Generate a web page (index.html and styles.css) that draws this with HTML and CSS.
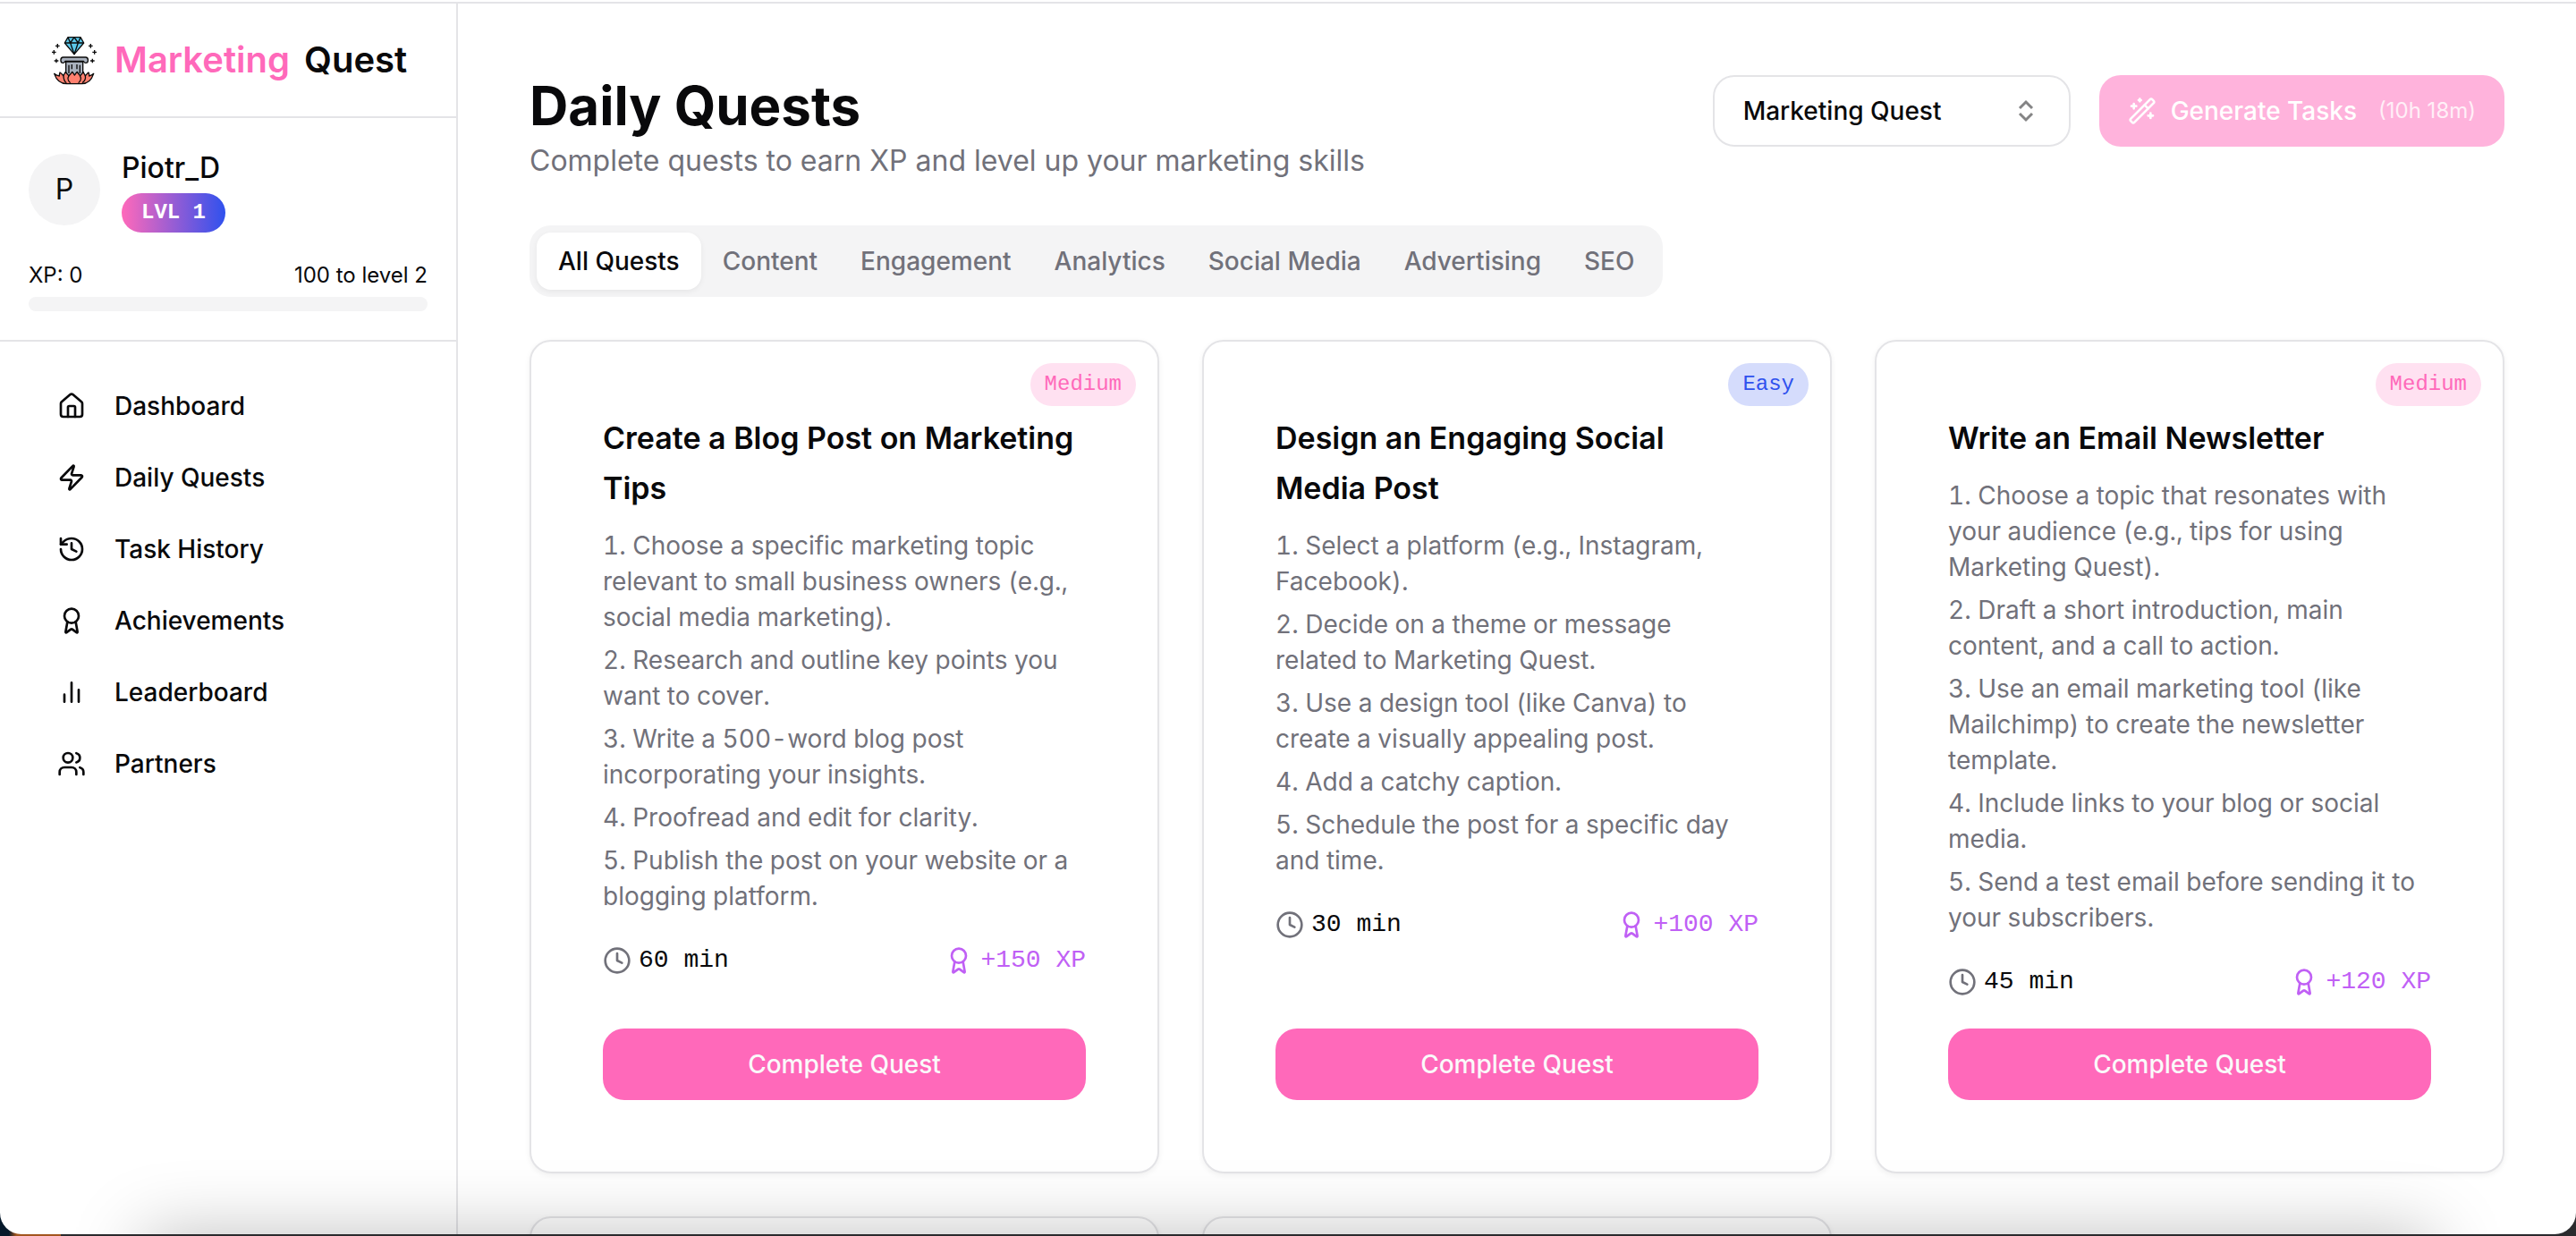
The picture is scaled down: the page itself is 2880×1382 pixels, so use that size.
FILE: index.html
```
<!DOCTYPE html>
<html lang="en">
<head>
    <meta charset="UTF-8">
    <meta name="viewport" content="width=device-width, initial-scale=1.0">
    <title>Daily Quests - Marketing Quest</title>
    <link rel="stylesheet" href="styles.css">
</head>
<body>

<!-- shared icons -->
<svg class="sprite" aria-hidden="true">
    <symbol id="icon-clock" viewBox="0 0 24 24">
        <circle cx="12" cy="12" r="10"/>
        <path d="M12 6v6l4 2"/>
    </symbol>
    <symbol id="icon-award" viewBox="0 0 24 24">
        <path d="m15.477 12.89 1.515 8.526a.5.5 0 0 1-.81.47l-3.58-2.687a1 1 0 0 0-1.197 0l-3.586 2.686a.5.5 0 0 1-.81-.469l1.514-8.526"/>
        <circle cx="12" cy="8" r="6"/>
    </symbol>
</svg>

<div class="window">
    <aside class="sidebar">
        <div class="brand">
            <svg class="logo" viewBox="48 54 168 168" aria-hidden="true">
                <g class="logo-sparks">
                    <path d="M73 84v14M66 91h14M61 105v14M54 112h14M69 134v14M62 141h14"/>
                    <path d="M184 84v14M177 91h14M197 105v14M190 112h14M190 134v14M183 141h14"/>
                </g>
                <g class="logo-line">
                    <path fill="#5bc8ea" d="M108 62h42l11 19-32 38-32-38z"/>
                    <path fill="none" d="M97 81h64M108 62l8 19 13-19 13 19 8-19M116 81l13 38 13-38"/>
                    <path fill="#a9b1bd" d="M101 144h57v54h-57z"/>
                    <path fill="none" d="M111 155v28M121 153v16M138 153v16M148 155v28"/>
                    <path fill="#a9b1bd" d="M92 129h75c11 0 11 19 0 19-5 0-6-3-7-6H99c-1 3-2 6-7 6-11 0-11-19 0-19z"/>
                    <path fill="#ff806f" d="M62 184c6 6 12 6 17 8-1-5 2-8 2-12 6 3 8 8 12 11 1-5 5-7 6-12 6 4 8 9 12 12 3-5 9-7 11-13 5 3 4 7 8 11 4-4 4-8 9-11 2 6 7 8 10 13 4-3 5-8 11-12 1 5 4 7 6 12 4-3 6-8 11-11 1 4 3 7 2 12 5-2 9-2 15-8-8 25-24 34-40 34h-50c-16 0-34-9-42-34z"/>
                    <path fill="none" d="M93 191c0 9 2 18 10 24M111 191c-5 8-3 18 5 24M148 191c5 8 3 18-5 24M166 191c2 9-1 18-10 24"/>
                </g>
            </svg>
            <span class="brand-name"><span class="brand-accent">Marketing</span><span>Quest</span></span>
        </div>

        <div class="profile">
            <div class="user">
                <div class="avatar">P</div>
                <div class="user-info">
                    <span class="user-name">Piotr_D</span>
                    <span class="level">LVL 1</span>
                </div>
            </div>
            <div class="xp-labels">
                <span>XP: 0</span>
                <span>100 to level 2</span>
            </div>
            <div class="xp-bar" role="progressbar" aria-label="XP" aria-valuemin="0" aria-valuemax="100" aria-valuenow="0"></div>
        </div>

        <nav class="menu">
            <a href="#dashboard">
                <svg class="icon" viewBox="0 0 24 24"><path d="M15 21v-8a1 1 0 0 0-1-1h-4a1 1 0 0 0-1 1v8"/><path d="M3 10a2 2 0 0 1 .709-1.528l7-5.999a2 2 0 0 1 2.582 0l7 5.999A2 2 0 0 1 21 10v9a2 2 0 0 1-2 2H5a2 2 0 0 1-2-2z"/></svg>
                Dashboard
            </a>
            <a href="#quests">
                <svg class="icon" viewBox="0 0 24 24"><path d="M4 14a1 1 0 0 1-.78-1.63l9.9-10.2a.5.5 0 0 1 .86.46l-1.92 6.02A1 1 0 0 0 13 10h7a1 1 0 0 1 .78 1.63l-9.9 10.2a.5.5 0 0 1-.86-.46l1.92-6.02A1 1 0 0 0 11 14z"/></svg>
                Daily Quests
            </a>
            <a href="#history">
                <svg class="icon" viewBox="0 0 24 24"><path d="M3 12a9 9 0 1 0 9-9 9.75 9.75 0 0 0-6.74 2.74L3 8"/><path d="M3 3v5h5"/><path d="M12 7v5l4 2"/></svg>
                Task History
            </a>
            <a href="#achievements">
                <svg class="icon"><use href="#icon-award"/></svg>
                Achievements
            </a>
            <a href="#leaderboard">
                <svg class="icon" viewBox="0 0 24 24"><path d="M18 20V10M12 20V4M6 20v-6"/></svg>
                Leaderboard
            </a>
            <a href="#partners">
                <svg class="icon" viewBox="0 0 24 24"><path d="M16 21v-2a4 4 0 0 0-4-4H6a4 4 0 0 0-4 4v2"/><circle cx="9" cy="7" r="4"/><path d="M22 21v-2a4 4 0 0 0-3-3.87"/><path d="M16 3.13a4 4 0 0 1 0 7.75"/></svg>
                Partners
            </a>
        </nav>
    </aside>

    <main class="content">
        <header class="page-header">
            <div>
                <h1>Daily Quests</h1>
                <p class="subtitle">Complete quests to earn XP and level up your marketing skills</p>
            </div>
            <div class="actions">
                <div class="project">
                    <select class="project-select" aria-label="Project">
                        <option>Marketing Quest</option>
                    </select>
                    <svg class="project-caret" viewBox="0 0 32 32" aria-hidden="true"><path d="M9 13l7-7 7 7M9 19l7 7 7-7"/></svg>
                </div>
                <button class="btn generate" type="button" disabled>
                    <svg class="icon" viewBox="0 0 24 24"><path d="m21.64 3.64-1.28-1.28a1.21 1.21 0 0 0-1.72 0L2.36 18.64a1.21 1.21 0 0 0 0 1.72l1.28 1.28a1.2 1.2 0 0 0 1.72 0L21.64 5.36a1.2 1.2 0 0 0 0-1.72"/><path d="m14 7 3 3M5 6v4M19 14v4M10 2v2M7 8H3M21 16h-4M11 3H9"/></svg>
                    Generate Tasks
                    <span class="countdown">(10h 18m)</span>
                </button>
            </div>
        </header>

        <div class="tabs" role="tablist">
            <button class="tab active" type="button" role="tab" aria-selected="true">All Quests</button>
            <button class="tab" type="button" role="tab">Content</button>
            <button class="tab" type="button" role="tab">Engagement</button>
            <button class="tab" type="button" role="tab">Analytics</button>
            <button class="tab" type="button" role="tab">Social Media</button>
            <button class="tab" type="button" role="tab">Advertising</button>
            <button class="tab" type="button" role="tab">SEO</button>
        </div>

        <section class="quests">
            <article class="card">
                <span class="badge medium">Medium</span>
                <h2>Create a Blog Post on Marketing Tips</h2>
                <div class="steps">
                    <p>1. Choose a specific marketing topic relevant to small business owners (e.g., social media marketing).</p>
                    <p>2. Research and outline key points you want to cover.</p>
                    <p>3. Write a 500-word blog post incorporating your insights.</p>
                    <p>4. Proofread and edit for clarity.</p>
                    <p>5. Publish the post on your website or a blogging platform.</p>
                </div>
                <div class="meta">
                    <span class="time"><svg class="icon"><use href="#icon-clock"/></svg>60 min</span>
                    <span class="reward"><svg class="icon"><use href="#icon-award"/></svg>+150 XP</span>
                </div>
                <button class="btn complete" type="button">Complete Quest</button>
            </article>

            <article class="card">
                <span class="badge easy">Easy</span>
                <h2>Design an Engaging Social Media Post</h2>
                <div class="steps">
                    <p>1. Select a platform (e.g., Instagram, Facebook).</p>
                    <p>2. Decide on a theme or message related to Marketing Quest.</p>
                    <p>3. Use a design tool (like Canva) to create a visually appealing post.</p>
                    <p>4. Add a catchy caption.</p>
                    <p>5. Schedule the post for a specific day and time.</p>
                </div>
                <div class="meta">
                    <span class="time"><svg class="icon"><use href="#icon-clock"/></svg>30 min</span>
                    <span class="reward"><svg class="icon"><use href="#icon-award"/></svg>+100 XP</span>
                </div>
                <button class="btn complete" type="button">Complete Quest</button>
            </article>

            <article class="card">
                <span class="badge medium">Medium</span>
                <h2>Write an Email Newsletter</h2>
                <div class="steps">
                    <p>1. Choose a topic that resonates with your audience (e.g., tips for using Marketing Quest).</p>
                    <p>2. Draft a short introduction, main content, and a call to action.</p>
                    <p>3. Use an email marketing tool (like Mailchimp) to create the newsletter template.</p>
                    <p>4. Include links to your blog or social media.</p>
                    <p>5. Send a test email before sending it to your subscribers.</p>
                </div>
                <div class="meta">
                    <span class="time"><svg class="icon"><use href="#icon-clock"/></svg>45 min</span>
                    <span class="reward"><svg class="icon"><use href="#icon-award"/></svg>+120 XP</span>
                </div>
                <button class="btn complete" type="button">Complete Quest</button>
            </article>

            <article class="card"></article>
            <article class="card"></article>
        </section>
    </main>
</div>
</body>
</html>
```
FILE: styles.css
```
* {
    box-sizing: border-box;
}

body {
    margin: 0;
    height: 100vh;
    padding-bottom: 2px;
    overflow: hidden;
    background: linear-gradient(90deg, #06192b 10px, #a3561f 18px, #a3561f 68px, #2a2a2d 68px);
    font-family: Inter, "Liberation Sans", sans-serif;
    font-size: 28px;
    line-height: 40px;
    color: #09090b;
}

h1, h2, p {
    margin: 0;
}

button, select {
    font: inherit;
    color: inherit;
}

.sprite {
    position: absolute;
    width: 0;
    height: 0;
}

.icon {
    width: 32px;
    height: 32px;
    flex-shrink: 0;
    fill: none;
    stroke: currentColor;
    stroke-width: 2;
    stroke-linecap: round;
    stroke-linejoin: round;
}

.window {
    position: relative;
    display: flex;
    height: 100%;
    padding-top: 2px;
    overflow: hidden;
    background-color: #fff;
    border-radius: 0 0 24px 24px;
}

/* soft shadow along the bottom edge */
.window::after {
    content: "";
    position: absolute;
    top: 100%;
    left: 160px;
    right: 160px;
    height: 160px;
    box-shadow: 0 0 80px rgba(0, 0, 0, 0.25);
    pointer-events: none;
}

/* sidebar */
.sidebar {
    width: 512px;
    flex-shrink: 0;
    border-top: 2px solid #e4e4e7;
    border-right: 2px solid #e4e4e7;
}

.brand {
    display: flex;
    align-items: center;
    gap: 16px;
    height: 128px;
    padding-left: 56px;
    border-bottom: 2px solid #e4e4e7;
}

.logo {
    width: 56px;
    height: 56px;
    flex-shrink: 0;
}

.logo-sparks,
.logo-line {
    fill: none;
    stroke: #0b0b0b;
    stroke-width: 4;
    stroke-linejoin: round;
}

.brand-name {
    display: flex;
    gap: 16px;
    font-size: 40px;
    font-weight: 600;
}

.brand-accent {
    color: #ff69ba;
}

.profile {
    padding: 32px;
    border-bottom: 2px solid #e4e4e7;
}

.user {
    display: flex;
    align-items: center;
    gap: 24px;
}

.avatar {
    display: flex;
    align-items: center;
    justify-content: center;
    width: 80px;
    height: 80px;
    border-radius: 50%;
    background-color: #f4f4f5;
    font-size: 32px;
}

.user-info {
    display: flex;
    flex-direction: column;
    align-items: flex-start;
    gap: 4px;
}

.user-name {
    font-size: 32px;
    font-weight: 500;
    line-height: 48px;
}

.level {
    padding: 4px 22px;
    border-radius: 22px;
    background: linear-gradient(90deg, #ff69ba, #2f51ee);
    color: #fff;
    font-family: "Liberation Mono", monospace;
    font-size: 24px;
    font-weight: 700;
    line-height: 36px;
}

.xp-labels {
    display: flex;
    justify-content: space-between;
    margin-top: 32px;
    margin-bottom: 8px;
    font-size: 24px;
    line-height: 32px;
}

.xp-bar {
    height: 16px;
    border-radius: 8px;
    background-color: #f4f4f5;
}

.menu {
    display: flex;
    flex-direction: column;
    padding: 32px;
}

.menu a {
    display: flex;
    align-items: center;
    gap: 32px;
    padding: 20px 32px;
    color: inherit;
    font-weight: 500;
    text-decoration: none;
}

/* main column */
.content {
    flex: 1;
    min-width: 0;
    padding: 80px;
    border-top: 2px solid #e4e4e7;
    overflow: hidden;
}

.page-header {
    display: flex;
    justify-content: space-between;
    align-items: flex-start;
    height: 120px;
}

h1 {
    font-size: 60px;
    font-weight: 700;
    line-height: 68px;
}

.subtitle {
    margin-top: 4px;
    color: #71717a;
    font-size: 32px;
    line-height: 48px;
}

.actions {
    display: flex;
    gap: 32px;
}

.project {
    position: relative;
}

.project-select {
    width: 400px;
    height: 80px;
    padding: 0 32px;
    appearance: none;
    border: 2px solid #e4e4e7;
    border-radius: 24px;
    background-color: #fff;
    font-weight: 500;
}

.project-caret {
    position: absolute;
    top: 24px;
    right: 34px;
    width: 32px;
    height: 32px;
    fill: none;
    stroke: #848485;
    stroke-width: 3;
    pointer-events: none;
}

.btn {
    display: flex;
    align-items: center;
    justify-content: center;
    gap: 16px;
    height: 80px;
    padding: 0 32px;
    border: none;
    border-radius: 24px;
    background-color: #ff69ba;
    color: #fafafa;
    font-weight: 500;
    cursor: pointer;
}

.btn:disabled {
    opacity: 0.5;
    color: #fff;
    cursor: default;
}

.countdown {
    margin-left: 8px;
    font-size: 24px;
    font-weight: 400;
    opacity: 0.8;
}

.tabs {
    display: inline-flex;
    margin-top: 48px;
    padding: 8px;
    border-radius: 24px;
    background-color: #f4f4f5;
    color: #71717a;
}

.tab {
    height: 64px;
    padding: 0 24px;
    border: none;
    border-radius: 16px;
    background: none;
    font-weight: 500;
    cursor: pointer;
}

.tab.active {
    background-color: #fff;
    color: #09090b;
    box-shadow: 0 2px 6px rgba(0, 0, 0, 0.06);
}

.quests {
    display: grid;
    grid-template-columns: repeat(3, 1fr);
    gap: 48px;
    margin-top: 48px;
}

.card {
    position: relative;
    display: flex;
    flex-direction: column;
    min-height: 400px;
    padding: 80px;
    border: 2px solid #e4e4e7;
    border-radius: 24px;
    background-color: #fff;
    box-shadow: 0 2px 6px rgba(0, 0, 0, 0.06);
}

.badge {
    position: absolute;
    top: 24px;
    right: 24px;
    padding: 8px 16px;
    border-radius: 24px;
    font-family: "Liberation Mono", monospace;
    font-size: 24px;
    line-height: 32px;
}

.badge.medium {
    background-color: #ffe1f1;
    color: #ff69ba;
}

.badge.easy {
    background-color: #d5dcfc;
    color: #2f51ee;
}

.card h2 {
    font-size: 34px;
    font-weight: 600;
    line-height: 56px;
}

.steps {
    display: flex;
    flex-direction: column;
    gap: 8px;
    margin-top: 16px;
    color: #71717a;
    font-variant-numeric: tabular-nums;
}

.meta {
    display: flex;
    justify-content: space-between;
    margin: 32px 0;
    font-family: "Liberation Mono", monospace;
}

.time, .reward {
    display: flex;
    align-items: center;
    gap: 8px;
}

.time .icon {
    color: #71717a;
}

.reward {
    color: #c060f5;
}

.complete {
    margin-top: auto;
}
```
